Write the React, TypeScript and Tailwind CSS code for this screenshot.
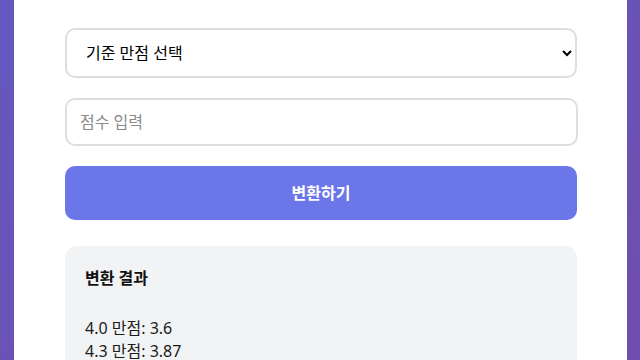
import React from "react";

export default function App() {
  const font = { fontFamily: '"Noto Sans", "Noto Sans CJK KR", sans-serif' };
  return (
    <div
      className="h-[360px] w-[640px] overflow-hidden bg-gradient-to-br from-[#6458bf] to-[#6f4eae] pl-[14px] pr-[13px]"
      style={font}
    >
      <div className="h-full bg-white pl-[51px] pr-[50px] pt-[28px]">
        <div className="flex flex-col">
          <select
            className="h-[50px] w-full rounded-[10px] border-2 border-[#dedede] bg-white px-[15px] text-[16px] text-black outline-none"
            defaultValue=""
          >
            <option value="">기준 만점 선택</option>
            <option value="4.0">4.0</option>
            <option value="4.3">4.3</option>
            <option value="4.5">4.5</option>
          </select>
          <input
            className="mt-[20px] h-[48px] w-[513px] rounded-[10px] border-2 border-[#dedede] bg-white px-[13px] text-[16px] text-black outline-none placeholder:text-[#8a8a8a]"
            placeholder="점수 입력"
          />
          <button className="mt-[20px] h-[54px] w-full rounded-[10px] bg-[#6b76e8] text-[16px] font-bold text-white">
            변환하기
          </button>
          <div className="mt-[26px] h-[200px] rounded-[12px] bg-[#f2f3f5] px-[20px] pt-[20px] text-[#111]">
            <div className="text-[16px] font-bold leading-[24px]">변환 결과</div>
            <div className="mt-[27px] text-[16px] leading-[23px] text-[#1a1a1a]">
              <div>4.0 만점: 3.6</div>
              <div>4.3 만점: 3.87</div>
              <div>4.5 만점: 4.05</div>
            </div>
          </div>
        </div>
      </div>
    </div>
  );
}
